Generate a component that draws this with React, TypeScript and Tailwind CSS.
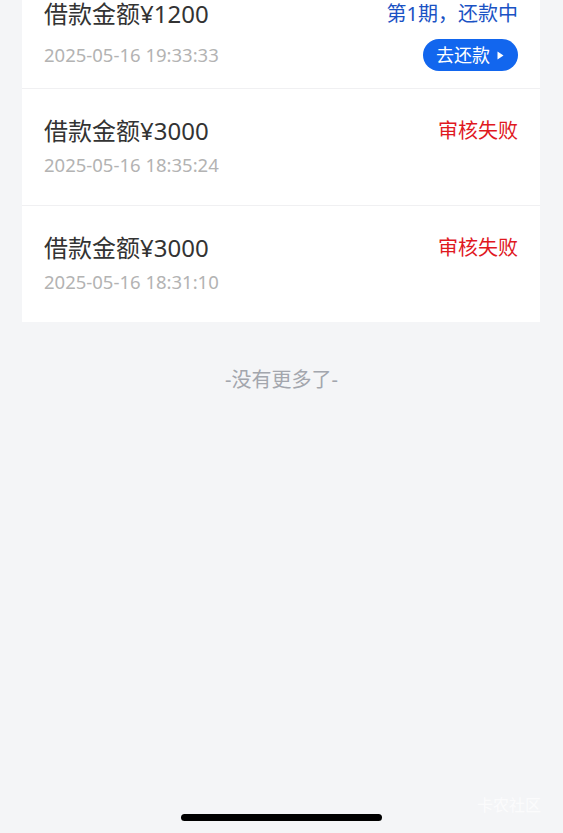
import React from 'react';

const font = { fontFamily: '"Noto Sans", "Noto Sans CJK SC", sans-serif' };

interface Loan {
  amount: number;
  time: string;
  status: 'repaying' | 'failed';
}

const loans: Loan[] = [
  { amount: 1200, time: '2025-05-16 19:33:33', status: 'repaying' },
  { amount: 3000, time: '2025-05-16 18:35:24', status: 'failed' },
  { amount: 3000, time: '2025-05-16 18:31:10', status: 'failed' },
];

function LoanRow({ loan, first }: { loan: Loan; first: boolean }) {
  if (loan.status === 'repaying') {
    return (
      <div className="px-[22px] pt-[28px] pb-[17px]">
        <div className="flex items-center justify-between h-[30px]">
          <span className="text-[24px] text-[#333333] leading-none">借款金额¥{loan.amount}</span>
          <span className="text-[20px] text-[#1a52c4] leading-none">第1期，还款中</span>
        </div>
        <div className="flex items-center justify-between mt-[10px]">
          <span className="text-[18.5px] text-[#b3b3b3] leading-none">{loan.time}</span>
          <button className="flex items-center gap-[7px] h-[32px] pl-[13px] pr-[14px] rounded-full bg-[#1266ee] text-white text-[18px] leading-none">
            去还款
            <svg width="7" height="9" viewBox="0 0 7 9">
              <path d="M0.5 0.5 L6.5 4.5 L0.5 8.5 Z" fill="white" />
            </svg>
          </button>
        </div>
      </div>
    );
  }
  return (
    <div className={`px-[22px] pt-[27px] pb-[28px] ${first ? '' : 'border-t border-[#f0f0f2]'}`}>
      <div className="flex items-center justify-between h-[30px]">
        <span className="text-[24px] text-[#333333] leading-none">借款金额¥{loan.amount}</span>
        <span className="text-[20px] text-[#e0191f] leading-none">审核失败</span>
      </div>
      <div className="mt-[7px] h-[24px] flex items-center">
        <span className="text-[18.5px] text-[#b3b3b3] leading-none">{loan.time}</span>
      </div>
    </div>
  );
}

export default function App() {
  return (
    <div className="relative w-[563px] h-[833px] overflow-hidden bg-[#f4f5f7]" style={font}>
      <div className="-mt-[29px] ml-[22px] w-[518px] bg-white">
        {loans.map((loan, i) => (
          <LoanRow key={i} loan={loan} first={i === 0} />
        ))}
      </div>
      <div className="mt-[48px] text-center text-[20px] text-[#a3a6ad] leading-none">-没有更多了-</div>

      {/* watermark */}
      <div className="absolute right-[22px] bottom-[20px] text-[16px] text-white/70 leading-none">卡农社区</div>
      {/* home indicator */}
      <div className="absolute left-[181px] bottom-[12px] w-[201px] h-[7px] rounded-full bg-black" />
    </div>
  );
}
